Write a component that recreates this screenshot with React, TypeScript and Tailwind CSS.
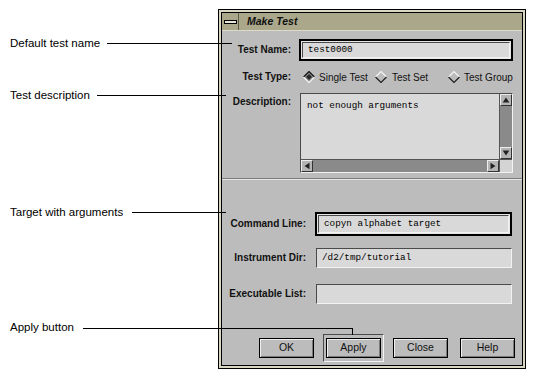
import React from "react";

const sans = "font-['Liberation_Sans',Arial,sans-serif]";
const mono = "font-['Liberation_Mono','Courier_New',monospace]";

const sunken = "border border-t-[#4a4a4a] border-l-[#4a4a4a] border-b-[#f2f2f2] border-r-[#f2f2f2]";

function Field({ value, focused, className }: { value?: string; focused?: boolean; className: string }) {
  const inner = (
    <div className={`flex items-center h-full w-full bg-[#d9d9d9] ${sunken} pl-[5px] text-[9.3px] text-black ${mono}`}>
      {value}
    </div>
  );
  if (focused) {
    return (
      <div className={`border-2 border-black p-px bg-[#e6e6e6] ${className}`}>{inner}</div>
    );
  }
  return <div className={className}>{inner}</div>;
}

function Diamond({ on }: { on?: boolean }) {
  return (
    <svg width="12" height="12" viewBox="0 0 12 12" className="shrink-0">
      <polygon points="6,0.5 11.5,6 6,11.5 0.5,6" fill={on ? "#8e8e8e" : "#bcbcbc"} />
      <polyline points="0.5,6 6,0.5 11.5,6" fill="none" stroke={on ? "#111" : "#f4f4f4"} strokeWidth="1.2" />
      <polyline points="0.5,6 6,11.5 11.5,6" fill="none" stroke={on ? "#f4f4f4" : "#222"} strokeWidth="1.2" />
      {on && <polygon points="6,3 9,6 6,9 3,6" fill="#2a2a2a" />}
    </svg>
  );
}

function Arrow({ dir }: { dir: "up" | "down" | "left" | "right" }) {
  const pts = {
    up: "6,3 10,9 2,9",
    down: "2,3 10,3 6,9",
    left: "3,6 9,2 9,10",
    right: "3,2 9,6 3,10",
  }[dir];
  return (
    <div className="w-[12px] h-[12px] bg-[#b4b4b4] border border-t-[#eee] border-l-[#eee] border-b-[#333] border-r-[#333] flex items-center justify-center">
      <svg width="10" height="10" viewBox="0 0 12 12">
        <polygon points={pts} fill="#222" />
      </svg>
    </div>
  );
}

function Button({ label }: { label: string }) {
  return (
    <div className="h-[20px] w-[55px] bg-[#bcbcbc] border border-black shadow-[inset_1px_1px_0_#f0f0f0,inset_-1px_-1px_0_#7a7a7a] flex items-center justify-center text-[10.5px] text-[#111]">
      {label}
    </div>
  );
}

const labelCls = "text-[10px] font-bold text-[#111] text-right leading-none";

export default function App() {
  return (
    <div className={`relative w-[536px] h-[381px] bg-white overflow-hidden ${sans}`}>
      {/* Dialog window */}
      <div className="ml-[218px] mt-[9px] w-[308px] h-[360px] border border-black bg-[#d9d6c3] p-[2px]">
        <div className="h-full border border-black flex flex-col">
          {/* Title bar */}
          <div className="h-[18px] shrink-0 bg-[#aaa78b] border-b border-[#dcdac8] flex items-center">
            <div className="w-[17px] h-full flex items-center justify-center border-r border-[#5c5a48]">
              <div className="w-[13px] h-[4px] bg-[#e8e6d6] border border-black" />
            </div>
            <span className="ml-[8px] text-[10.5px] font-bold italic text-[#111]">Make Test</span>
          </div>

          {/* Body */}
          <div className="flex-1 bg-[#bcbcbc] flex flex-col">
            <div className="flex items-center mt-[8px]">
              <div className={`w-[69px] ${labelCls}`}>Test Name:</div>
              <Field value="test0000" focused className="ml-[8px] w-[214px] h-[22px]" />
            </div>

            <div className="flex items-center mt-[9px] h-[14px] text-[10px] text-[#111]">
              <div className={`w-[69px] ${labelCls}`}>Test Type:</div>
              <div className="ml-[12px] w-[72px] flex items-center gap-[4px]">
                <Diamond on />
                <span>Single Test</span>
              </div>
              <div className="w-[73px] flex items-center gap-[5px]">
                <Diamond />
                <span>Test Set</span>
              </div>
              <div className="flex items-center gap-[4px]">
                <Diamond />
                <span>Test Group</span>
              </div>
            </div>

            <div className="flex items-start mt-[9px]">
              <div className={`w-[69px] pt-[4px] ${labelCls}`}>Description:</div>
              <div className={`ml-[9px] w-[213px] h-[80px] ${sunken} flex flex-col`}>
                <div className="flex flex-1">
                  <div className={`flex-1 bg-[#d9d9d9] pl-[6px] pt-[7px] text-[9.3px] text-black leading-none ${mono}`}>
                    not enough arguments
                  </div>
                  <div className="w-[13px] flex flex-col bg-[#8a8a8a] border-l border-[#555]">
                    <Arrow dir="up" />
                    <div className="flex-1" />
                    <Arrow dir="down" />
                  </div>
                </div>
                <div className="flex h-[13px] border-t border-[#555]">
                  <div className="flex-1 flex bg-[#8a8a8a]">
                    <Arrow dir="left" />
                    <div className="flex-1" />
                    <Arrow dir="right" />
                  </div>
                  <div className="w-[13px] bg-[#d4d4d4] border-l border-[#555]" />
                </div>
              </div>
            </div>

            {/* Separator */}
            <div className="mt-[5px] border-t border-[#7c7c7c] border-b border-b-[#e6e6e6]" />

            <div className="flex items-center mt-[32px]">
              <div className={`w-[84px] ${labelCls}`}>Command Line:</div>
              <Field value="copyn alphabet target" focused className="ml-[9px] w-[197px] h-[24px]" />
            </div>
            <div className="flex items-center mt-[12px]">
              <div className={`w-[84px] ${labelCls}`}>Instrument Dir:</div>
              <Field value="/d2/tmp/tutorial" className="ml-[10px] w-[196px] h-[20px]" />
            </div>
            <div className="flex items-center mt-[16px]">
              <div className={`w-[84px] ${labelCls}`}>Executable List:</div>
              <Field className="ml-[10px] w-[196px] h-[20px]" />
            </div>

            <div className="flex-1" />

            {/* Buttons */}
            <div className="flex justify-end gap-[6px] pr-[4px] pb-[3px]">
              <div className="w-[61px] h-[28px] flex items-center justify-center">
                <Button label="OK" />
              </div>
              <div className={`w-[61px] h-[28px] flex items-center justify-center ${sunken} border-b-[#e6e6e6] border-r-[#e6e6e6]`}>
                <Button label="Apply" />
              </div>
              <div className="w-[61px] h-[28px] flex items-center justify-center">
                <Button label="Close" />
              </div>
              <div className="w-[61px] h-[28px] flex items-center justify-center">
                <Button label="Help" />
              </div>
            </div>
          </div>
        </div>
      </div>

      {/* Callouts */}
      <div className="absolute left-[10px] top-[36px] text-[11.5px] leading-[14px] text-black">Default test name</div>
      <div className="absolute left-[107px] top-[43px] w-[125px] h-px bg-black" />

      <div className="absolute left-[10px] top-[88px] text-[11.5px] leading-[14px] text-black">Test description</div>
      <div className="absolute left-[97px] top-[95px] w-[129px] h-px bg-black" />

      <div className="absolute left-[10px] top-[205px] text-[11.5px] leading-[14px] text-black">Target with arguments</div>
      <div className="absolute left-[132px] top-[212px] w-[94px] h-px bg-black" />

      <div className="absolute left-[10px] top-[320px] text-[11.5px] leading-[14px] text-black">Apply button</div>
      <div className="absolute left-[83px] top-[328px] w-[270px] h-px bg-black" />
      <div className="absolute left-[352px] top-[328px] w-px h-[7px] bg-black" />
    </div>
  );
}
